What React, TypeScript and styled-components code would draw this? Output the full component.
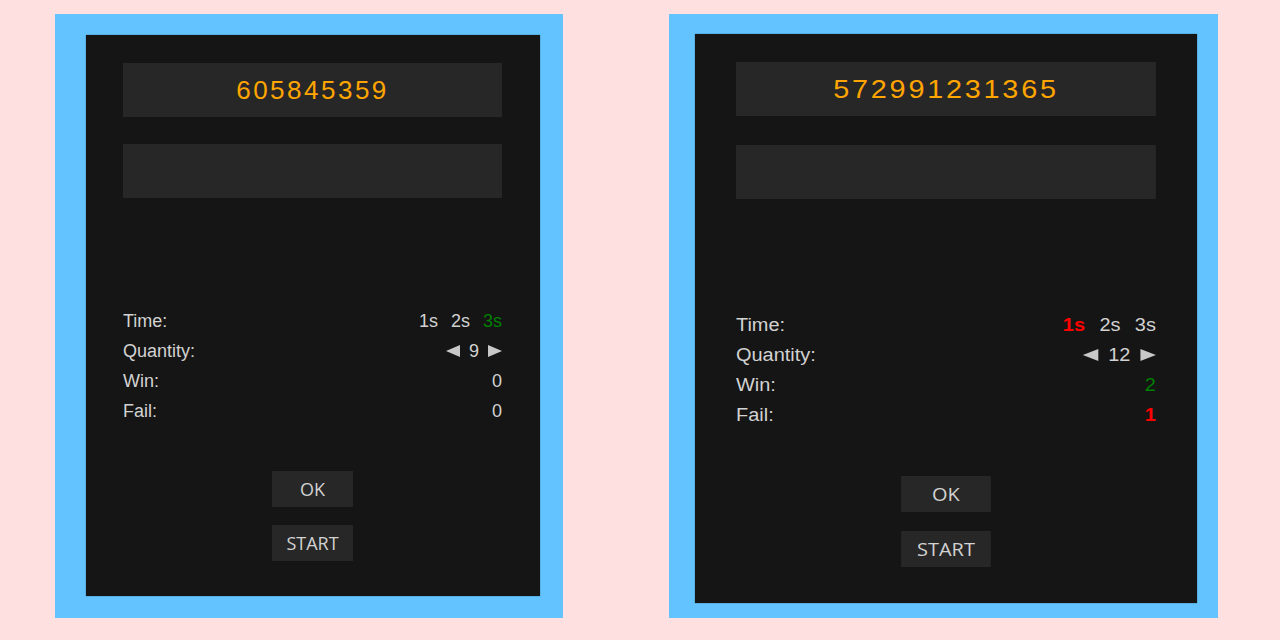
import React from "react";
import styled, { createGlobalStyle } from "styled-components";

const GlobalStyle = createGlobalStyle`
  html, body {
    margin: 0;
    padding: 0;
    background: #ffe0e0;
  }
  body {
    font-family: "Liberation Sans", Arial, sans-serif;
  }
`;

const Page = styled.div`
  display: flex;
  align-items: flex-start;
  gap: 106px;
  padding: 14px 0 0 55px;
  height: 640px;
  box-sizing: border-box;
  background: #ffe0e0;
  overflow: hidden;
`;

const Frame = styled.div<{ $pad: string }>`
  display: flex;
  background: #62c3fe;
  padding: ${(p) => p.$pad};
`;

const Card = styled.div<{ $width: number; $pad: string }>`
  box-sizing: border-box;
  width: ${(p) => p.$width}px;
  padding: ${(p) => p.$pad};
  background: #151515;
  box-shadow: 0 0 1px rgba(0, 0, 0, 0.6);
  display: flex;
  flex-direction: column;
  align-items: flex-start;
`;

const Content = styled.div<{ $sx: number }>`
  width: 379px;
  display: flex;
  flex-direction: column;
  transform: scaleX(${(p) => p.$sx});
  transform-origin: left center;
`;

const Display = styled.div<{ $mt?: number }>`
  height: 54px;
  margin-top: ${(p) => p.$mt ?? 0}px;
  background: #272727;
  display: flex;
  align-items: center;
  justify-content: center;
  color: #ffa500;
  font-family: "Liberation Sans", Arial, sans-serif;
  font-size: 26px;
  letter-spacing: 2.5px;
`;

const Stats = styled.div<{ $mt: number }>`
  margin-top: ${(p) => p.$mt}px;
  display: flex;
  flex-direction: column;
`;

const Row = styled.div`
  display: flex;
  justify-content: space-between;
  align-items: center;
  height: 30px;
  font-family: "Liberation Sans", Arial, sans-serif;
  font-size: 18px;
  color: #d2d2d2;
`;

const Label = styled.span``;

const Options = styled.div`
  display: flex;
  gap: 13px;
`;

type Tone = "plain" | "good" | "bad";

const Value = styled.span<{ $tone?: Tone }>`
  color: ${(p) =>
    p.$tone === "good" ? "#008000" : p.$tone === "bad" ? "#ff0000" : "#d2d2d2"};
  font-weight: ${(p) => (p.$tone === "bad" ? 700 : 400)};
`;

const Stepper = styled.div`
  display: flex;
  align-items: center;
`;

const Arrow = styled.span<{ $dir: "left" | "right" }>`
  width: 0;
  height: 0;
  border-top: 6.5px solid transparent;
  border-bottom: 6.5px solid transparent;
  ${(p) =>
    p.$dir === "left"
      ? "border-right: 14px solid #c8c8c8;"
      : "border-left: 14px solid #c8c8c8;"}
`;

const Count = styled.span`
  margin: 0 9px;
  color: #d2d2d2;
`;

const Buttons = styled.div<{ $mt: number; $gap: number }>`
  margin-top: ${(p) => p.$mt}px;
  display: flex;
  flex-direction: column;
  align-items: center;
  gap: ${(p) => p.$gap}px;
`;

const Button = styled.button`
  width: 81px;
  height: 36px;
  border: none;
  padding: 0;
  background: #272727;
  color: #d2d2d2;
  font-family: "Open Sans", "Noto Sans", sans-serif;
  font-size: 18px;
  cursor: pointer;
`;

type PanelProps = {
  number: string;
  framePad: string;
  cardWidth: number;
  cardPad: string;
  sx: number;
  displayGap: number;
  statsGap: number;
  buttonsGap: number;
  btnGap: number;
  active: number;
  activeTone: Tone;
  quantity: number;
  win: number;
  winTone: Tone;
  fail: number;
  failTone: Tone;
};

function Panel(p: PanelProps) {
  return (
    <Frame $pad={p.framePad}>
      <Card $width={p.cardWidth} $pad={p.cardPad}>
        <Content $sx={p.sx}>
          <Display>{p.number}</Display>
          <Display $mt={p.displayGap} />
          <Stats $mt={p.statsGap}>
            <Row>
              <Label>Time:</Label>
              <Options>
                {["1s", "2s", "3s"].map((t, i) => (
                  <Value key={t} $tone={i === p.active ? p.activeTone : "plain"}>
                    {t}
                  </Value>
                ))}
              </Options>
            </Row>
            <Row>
              <Label>Quantity:</Label>
              <Stepper>
                <Arrow $dir="left" />
                <Count>{p.quantity}</Count>
                <Arrow $dir="right" />
              </Stepper>
            </Row>
            <Row>
              <Label>Win:</Label>
              <Value $tone={p.winTone}>{p.win}</Value>
            </Row>
            <Row>
              <Label>Fail:</Label>
              <Value $tone={p.failTone}>{p.fail}</Value>
            </Row>
          </Stats>
          <Buttons $mt={p.buttonsGap} $gap={p.btnGap}>
            <Button>OK</Button>
            <Button>START</Button>
          </Buttons>
        </Content>
      </Card>
    </Frame>
  );
}

export default function App() {
  return (
    <>
      <GlobalStyle />
      <Page>
        <Panel
          number="605845359"
          framePad="21px 23px 22px 31px"
          cardWidth={454}
          cardPad="28px 38px 35px 37px"
          sx={1}
          displayGap={27}
          statsGap={108}
          buttonsGap={45}
          btnGap={18}
          active={2}
          activeTone="good"
          quantity={9}
          win={0}
          winTone="plain"
          fail={0}
          failTone="plain"
        />
        <Panel
          number="572991231365"
          framePad="20px 21px 15px 26px"
          cardWidth={502}
          cardPad="28px 0 36px 41px"
          sx={1.108}
          displayGap={29}
          statsGap={111}
          buttonsGap={46}
          btnGap={19}
          active={0}
          activeTone="bad"
          quantity={12}
          win={2}
          winTone="good"
          fail={1}
          failTone="bad"
        />
      </Page>
    </>
  );
}
